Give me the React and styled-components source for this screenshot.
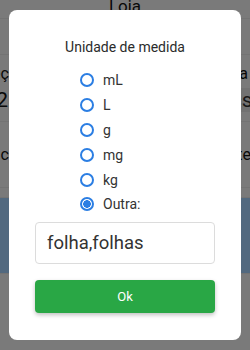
import React, { useState } from 'react';
import styled, { createGlobalStyle } from 'styled-components';

const GlobalStyle = createGlobalStyle`
  html, body {
    margin: 0;
    padding: 0;
    background: #f5f5f5;
    font-family: Roboto, "Noto Sans", "Liberation Sans", sans-serif;
    overflow: hidden;
  }
`;

// the form sitting behind the modal
const Page = styled.div`
  width: 250px;
  height: 350px;
  overflow: hidden;
  background: #f5f5f5;
`;

const Header = styled.div`
  height: 18px;
  line-height: 12px;
  text-align: center;
  font-size: 17px;
  color: #111;
  border-bottom: 1px solid #e6e6e6;
  overflow: hidden;
`;

const Row = styled.div`
  display: grid;
  grid-template-columns: 209px 300px;
  margin-left: -191px;
  height: ${p => p.$h}px;
  border-bottom: 1px solid #e6e6e6;
  background: ${p => p.$bg || 'transparent'};
`;

const Cell = styled.div`
  display: flex;
  flex-direction: column;
  justify-content: center;
  gap: 4px;
  align-items: ${p => (p.$right ? 'flex-end' : 'stretch')};
  padding-left: ${p => (p.$right ? 0 : 183)}px;
  color: #111;
  white-space: nowrap;
`;

const FieldLabel = styled.span`
  font-size: 16px;
  line-height: 20px;
`;

const FieldValue = styled.span`
  font-size: 21px;
  line-height: 24px;
  margin-right: ${p => p.$gap || 0}px;
  padding-left: ${p => (p.$boxed ? 18 : 0)}px;
  color: ${p => (p.$boxed ? '#333' : '#111')};
  background: ${p => (p.$boxed ? '#e4e4e4' : 'transparent')};
`;

const Backdrop = styled.div`
  position: fixed;
  inset: 0;
  background: rgba(0, 0, 0, 0.5);
  display: flex;
  align-items: flex-start;
  justify-content: center;
  padding-top: 10px;
`;

const Dialog = styled.div`
  width: 232px;
  height: 330px;
  box-sizing: border-box;
  background: #fff;
  border-radius: 8px;
  padding: 27px 26px 0;
  display: flex;
  flex-direction: column;
`;

const Title = styled.h2`
  margin: 0;
  font-size: 14px;
  line-height: 20px;
  font-weight: 400;
  color: #2b2b2b;
  text-align: center;
`;

const Options = styled.div`
  display: flex;
  flex-direction: column;
  margin: 11px 0 0 45px;
`;

const Option = styled.label`
  display: flex;
  align-items: center;
  gap: 9px;
  height: 24.8px;
  font-size: 14px;
  color: #333;
  cursor: pointer;
`;

const Radio = styled.input.attrs({ type: 'radio' })`
  appearance: none;
  margin: 0;
  width: 14px;
  height: 14px;
  border: 2px solid #2b7ee3;
  border-radius: 50%;
  box-sizing: border-box;
  background: #fff;
  &:checked {
    background: radial-gradient(circle, #2b7ee3 0 3.6px, #fff 4px);
  }
`;

const Input = styled.input`
  margin-top: 5px;
  height: 42px;
  box-sizing: border-box;
  border: 1px solid #dcdcdc;
  border-radius: 4px;
  padding: 0 11px;
  font-family: inherit;
  font-size: 18.5px;
  color: #333;
  outline: none;
`;

const Button = styled.button`
  margin-top: 16px;
  height: 33px;
  border: 0;
  border-radius: 4px;
  background: #29a745;
  color: #fff;
  font-family: inherit;
  font-size: 13px;
  box-shadow: 0 2px 4px rgba(0, 0, 0, 0.25);
  cursor: pointer;
`;

const units = ['mL', 'L', 'g', 'mg', 'kg', 'Outra:'];

export default function App() {
  const [unit, setUnit] = useState('Outra:');
  const [other, setOther] = useState('folha,folhas');

  return (
    <>
      <GlobalStyle />
      <Page>
        <Header>Loja</Header>
        <Row $h={35} />
        <Row $h={66}>
          <Cell $right>
            <FieldLabel>Preço</FieldLabel>
            <FieldValue $gap={10}>R$ 2</FieldValue>
          </Cell>
          <Cell>
            <FieldLabel>Escala</FieldLabel>
            <FieldValue $boxed>pcs</FieldValue>
          </Cell>
        </Row>
        <Row $h={65}>
          <Cell $right>
            <FieldLabel>Tópico</FieldLabel>
          </Cell>
          <Cell>
            <FieldLabel>Pacote</FieldLabel>
          </Cell>
        </Row>
        <Row $h={9} />
        <Row $h={75} $bg="#a4d2fe" />
      </Page>

      <Backdrop>
        <Dialog>
          <Title>Unidade de medida</Title>
          <Options>
            {units.map(u => (
              <Option key={u}>
                <Radio name="unit" checked={unit === u} onChange={() => setUnit(u)} />
                {u}
              </Option>
            ))}
          </Options>
          <Input value={other} onChange={e => setOther(e.target.value)} />
          <Button>Ok</Button>
        </Dialog>
      </Backdrop>
    </>
  );
}
